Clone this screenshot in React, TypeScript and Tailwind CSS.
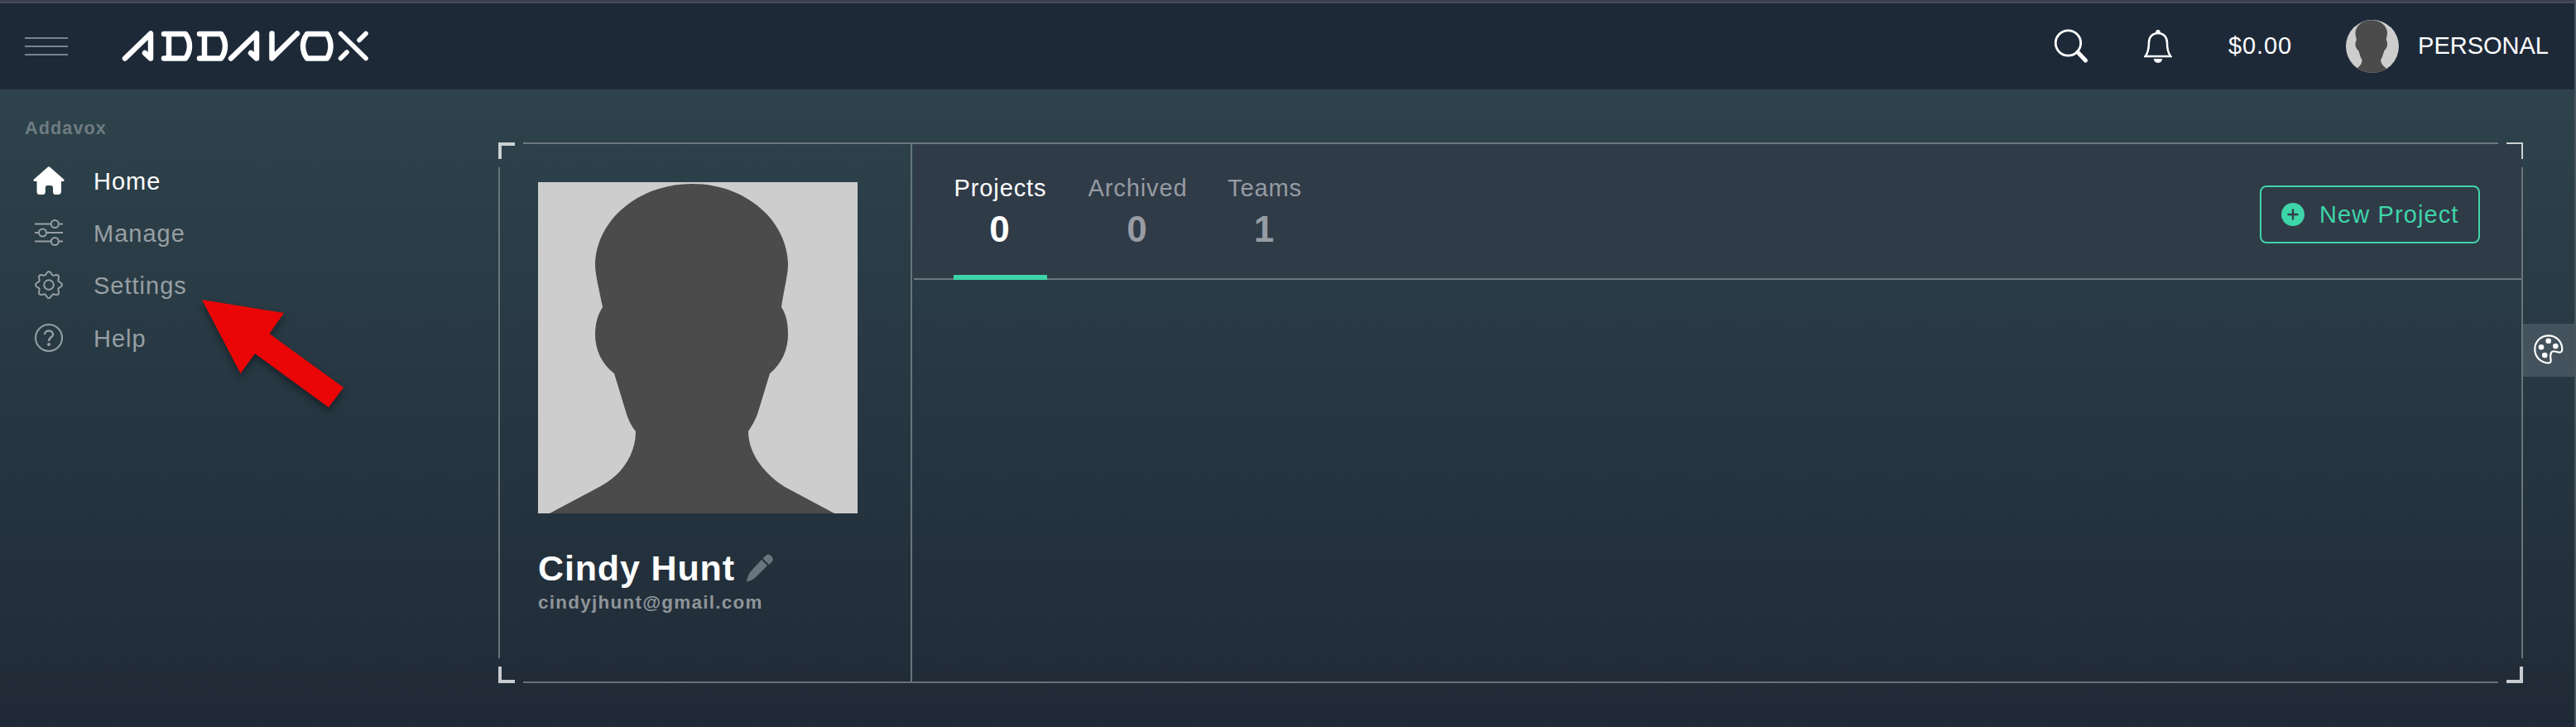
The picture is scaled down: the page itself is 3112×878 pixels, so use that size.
import type { ReactNode } from "react";

const Silhouette = ({ className }: { className: string }) => (
  <svg viewBox="0 0 386 400" preserveAspectRatio="none" className={className}>
    <rect width="386" height="400" fill="#cdcdcd" />
    <path
      fill="#4b4b4b"
      d="M14 400L76 367C102 353 118 328 118 301C112 293 109 287 106 277L92 231C76 219 69 201 69 184C69 171 72 160 78 151C73 125 69 112 69 98C71 45 122 2 186 2C250 2 300 45 302 98C302 112 298 125 294 151C300 160 302 171 302 184C302 201 295 219 280 231L266 277C263 287 260 291 254 301C254 325 270 350 298 368L358 400Z"
    />
  </svg>
);

const Logo = () => (
  <svg width="300" height="40" viewBox="0 0 300 40" fill="none" stroke="#fff" strokeWidth="6.500" strokeLinecap="round" strokeLinejoin="round">
    <path d="M4 34.500L35 4.500V34.500L28 28" />
    <path d="M51 5H77Q82 12 82 19.500Q82 28 77 34.500H51M57 5V34.500" />
    <path d="M94 5H120Q125 12 125 19.500Q125 28 120 34.500H94M100 5V34.500" />
    <path d="M132 34.500L163 4.500V34.500L156 28" />
    <path d="M181.500 4.500V34.500L212 4.500" />
    <path d="M224 5H248Q252.500 12 252.500 19.500Q252.500 28 248 34.500H224Q219 28 219 19.500Q219 12 224 5Z" />
    <path d="M264.500 4.500L295 34.500M295 4.500L287 12.500M272 27L264.500 34.500" strokeWidth="5.600" />
  </svg>
);

const HomeIcon = () => (
  <svg width="38" height="34" viewBox="0 0 38 34" fill="#fff">
    <path d="M17.500 1Q19 -.5 20.500 1L37 15.500Q38.800 18 36 18H34V30Q34 34 30 34H27Q24 34 24 30.500V26Q24 23 21 23H17.500Q14.800 23 14.800 26V30.500Q14.800 34 11.500 34H8Q4.500 34 4.500 30.500V18H2Q-.8 18 1 15.500Z" />
  </svg>
);

const ManageIcon = () => (
  <svg width="34" height="32" viewBox="0 0 34 32" fill="none" stroke="currentColor" strokeWidth="2">
    <path d="M0 5.500H19.500M29 5.500H34M0 16H5M14 16H34M0 26.500H19.500M29 26.500H34" />
    <circle cx="24.300" cy="5.500" r="4.500" />
    <circle cx="9.500" cy="16" r="4.500" />
    <circle cx="24.300" cy="26.500" r="4.500" />
  </svg>
);

const gearOutline = Array.from({ length: 96 }, (_, i) => {
  const angle = (i / 96) * Math.PI * 2;
  const radius = 14.2 + 1.8 * Math.cos(8 * angle);
  return `${(17 + radius * Math.sin(angle)).toFixed(2)},${(17 - radius * Math.cos(angle)).toFixed(2)}`;
}).join(" ");

const GearIcon = () => (
  <svg width="34" height="34" viewBox="0 0 34 34" fill="none" stroke="currentColor" strokeWidth="2" strokeLinejoin="round">
    <polygon points={gearOutline} />
    <circle cx="17" cy="17" r="5.800" />
  </svg>
);

const HelpIcon = () => (
  <svg width="34" height="34" viewBox="0 0 34 34" fill="none" stroke="currentColor" strokeWidth="2">
    <circle cx="17" cy="17" r="16" />
    <path d="M12 13C12 7 22 7 22 13C22 16.500 17 16 17 21" strokeWidth="2.500" />
    <circle cx="17" cy="25" r="2" fill="currentColor" stroke="none" />
  </svg>
);

const PaletteIcon = () => (
  <svg width="36" height="36" viewBox="0 0 36 36" fill="none" stroke="currentColor" strokeWidth="2.200">
    <path d="M34.300 18C34.300 8.500 27 1.300 17.800 1.300C8.500 1.300 1.300 8.500 1.300 17.800C1.300 27 8.500 34.300 17.500 34.300C20.500 34.300 21 33 20.500 30C20 27 20 24 21 22C22 20 24.500 20 27 20.800C29 21.500 31 21.800 32.500 21.300C34 20.700 34.300 19.500 34.300 18Z" />
    <g fill="currentColor" stroke="none">
      <circle cx="17.700" cy="7.800" r="3.300" />
      <circle cx="9" cy="15.300" r="3.300" />
      <circle cx="26.300" cy="14" r="3.300" />
      <circle cx="13.200" cy="25" r="3.300" />
    </g>
  </svg>
);

const NavItem = ({ icon, label, tone }: { icon: ReactNode; label: string; tone: string }) => (
  <a className={`flex h-[63.3px] items-center text-[29px] leading-none tracking-[1px] ${tone}`}>
    <span className="flex w-[58px] justify-center">{icon}</span>
    <span className="ml-[25px] pt-[3px]">{label}</span>
  </a>
);

const Tab = ({ label, count, active, width }: { label: string; count: string; active?: boolean; width: string }) => (
  <div className={`flex h-[164px] flex-col items-center ${width} ${active ? "border-b-[6px] border-[#3ed5a8] text-white" : "text-[#979ca3]"}`}>
    <span className="mt-[36px] text-[29px] leading-[34px] tracking-[0.9px] whitespace-nowrap">{label}</span>
    <span className="mt-[9px] pr-[2px] text-[44px] leading-[48px] font-bold">{count}</span>
  </div>
);

export default function App() {
  return (
    <div className="relative flex h-[878px] w-[3112px] flex-col overflow-hidden border-r-2 border-[#4a575f] bg-linear-to-b from-[#30464e] via-[#263641] via-60% to-[#202a36] font-['Liberation_Sans',Arial,sans-serif]">
      <div className="h-[2px] shrink-0 bg-[#373e55]" />
      <div className="h-[2px] shrink-0 bg-[#4b4c55]" />
      <header className="flex h-[104px] shrink-0 items-center bg-[#1e2938] pl-[30px] text-white">
        <div className="flex w-[52px] flex-col gap-2">
          <div className="h-[2px] bg-[#7a818a]" />
          <div className="h-[2px] bg-[#7a818a]" />
          <div className="h-[2px] bg-[#7a818a]" />
        </div>
        <div className="ml-[65px]"><Logo /></div>
        <div className="ml-auto flex items-center">
          <svg width="42" height="42" viewBox="0 0 42 42" fill="none" stroke="#fff">
            <circle cx="17.500" cy="17" r="15.200" strokeWidth="2.800" />
            <path d="M29 28L38.500 38" strokeWidth="5" strokeLinecap="round" />
          </svg>
          <svg width="34" height="40" viewBox="0 0 34 40" className="ml-[67px]" fill="none" stroke="#fff" strokeWidth="2.500">
            <path d="M1.800 32C5.500 27 6 21 6 15.500C6 8.500 10.500 4 17 4C23.500 4 28 8.500 28 15.500C28 21 28.500 27 32.200 32Z" />
            <path d="M15 3Q17 -1 19 3" fill="#fff" />
            <path d="M12 35H22C22 41.500 12 41.500 12 35Z" fill="#fff" stroke="none" />
          </svg>
          <span className="ml-[68px] text-[29px] tracking-[0.9px]">$0.00</span>
          <Silhouette className="ml-[65px] size-16 rounded-full" />
          <span className="mr-[31px] ml-[23px] text-[29px] tracking-[0px]">PERSONAL</span>
        </div>
      </header>

      <div className="flex min-h-0 flex-1">
        <aside className="w-[602px] shrink-0 pl-[30px]">
          <div className="mt-[34px] text-[21.600px] leading-[25px] font-bold tracking-[1.1px] text-[#6f7c82]">Addavox</div>
          <nav className="mt-[19px] text-[#979fa3]">
            <NavItem icon={<HomeIcon />} label="Home" tone="text-white" />
            <NavItem icon={<ManageIcon />} label="Manage" tone="" />
            <NavItem icon={<GearIcon />} label="Settings" tone="" />
            <NavItem icon={<HelpIcon />} label="Help" tone="" />
          </nav>
        </aside>

        <main className="relative mt-[64px] flex h-[653px] w-[2444px] shrink-0 box-content pr-[2px]">
          <section className="w-[498px] shrink-0 pt-12 pl-12">
            <Silhouette className="h-[400px] w-[386px]" />
            <div className="mt-[41px] flex items-center">
              <h1 className="text-[43px] leading-[50px] font-bold tracking-[0.85px] whitespace-nowrap text-white">Cindy Hunt</h1>
              <svg width="32" height="34" viewBox="0 0 32 34" className="ml-[14px]" fill="#68757d">
                <path d="M18 7L25 14L11 28Q7 32 0 33.500Q1 26 5 21Z" />
                <path d="M19.500 5.500L23 2Q26 -1 29 2L30.500 3.500Q33 6.500 30.500 9.500L27 13Z" />
              </svg>
            </div>
            <div className="mt-1 text-[22.400px] leading-[25px] font-bold tracking-[1.3px] text-[#8f959a]">cindyjhunt@gmail.com</div>
          </section>
          <div className="w-[2px] shrink-0 bg-[#68757d]" />
          <section className="min-w-0 flex-1 pt-[2px] pl-[2px]">
            <div className="flex h-[164px] border-b-2 border-[#6d7780] bg-[#303b48] pl-12">
              <Tab label="Projects" count="0" active width="w-[113px]" />
              <div className="w-12" />
              <Tab label="Archived" count="0" width="w-[123px]" />
              <div className="w-12" />
              <Tab label="Teams" count="1" width="w-[88px]" />
              <button className="mt-[50px] mr-[50px] ml-auto flex h-[70px] w-[266px] items-center rounded-lg border-2 border-[#3ed5a8] pl-6 text-[29px] text-[#3ed5a8]">
                <svg width="28" height="28" viewBox="0 0 28 28">
                  <circle cx="14" cy="14" r="14" fill="#3ed5a8" />
                  <path d="M14 8.500V19.500M8.500 14H19.500" stroke="#303b48" strokeWidth="2.400" strokeLinecap="round" />
                </svg>
                <span className="ml-[18px] pt-[2px] tracking-[1.1px] whitespace-nowrap">New Project</span>
              </button>
            </div>
          </section>

          <div className="absolute top-0 right-[30px] left-[30px] h-[2px] bg-[#6d7980]" />
          <div className="absolute right-[30px] bottom-0 left-[30px] h-[2px] bg-[#68727a]" />
          <div className="absolute top-[30px] bottom-[30px] left-0 w-[2px] bg-[#68757d]" />
          <div className="absolute top-[30px] right-0 bottom-[30px] w-[2px] bg-[#68757d]" />
          <div className="absolute top-0 left-0 size-5 border-t-4 border-l-4 border-[#cbd0d2]" />
          <div className="absolute top-0 right-0 size-5 border-t-2 border-r-2 border-[#cbd0d2]" />
          <div className="absolute bottom-0 left-0 size-5 border-b-4 border-l-4 border-[#c9cccf]" />
          <div className="absolute right-0 bottom-0 size-5 border-r-4 border-b-4 border-[#c9cccf]" />
        </main>

        <div className="mt-[283px] flex h-16 flex-1 items-center justify-center bg-[#43525c] pb-[2px] text-white">
          <PaletteIcon />
        </div>
      </div>

      <svg width="220" height="180" viewBox="230 340 220 180" className="absolute top-[340px] left-[230px] drop-shadow-[0_5px_5px_rgba(0,0,0,0.4)]">
        <path d="M244 362L343 378L325.500 403L415 468L397 492L308 427L290.500 451Z" fill="#ea0606" />
      </svg>
    </div>
  );
}
